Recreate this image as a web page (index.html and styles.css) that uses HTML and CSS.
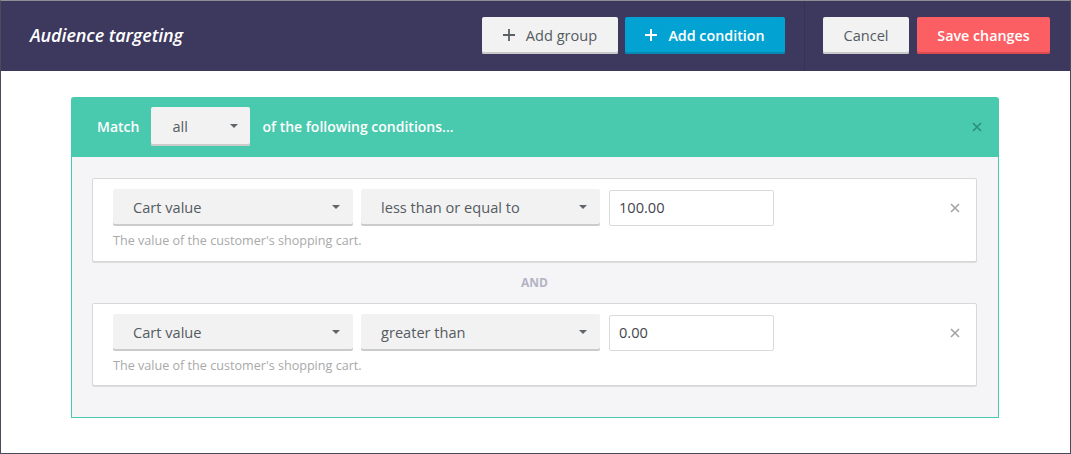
FILE: index.html
```html
<!DOCTYPE html>
<html>
<head>
<meta charset="utf-8">
<link rel="stylesheet" href="styles.css">
</head>
<body>
<div class="window">
  <header class="topbar">
    <h1 class="title">Audience targeting</h1>
    <div class="actions">
      <button class="btn btn-light"><svg class="plus" viewBox="0 0 12 12"><path d="M6 0V12M0 6H12"/></svg>Add group</button>
      <button class="btn btn-blue"><svg class="plus" viewBox="0 0 12 12"><path d="M6 0V12M0 6H12"/></svg>Add condition</button>
    </div>
    <div class="divider"></div>
    <div class="actions actions-right">
      <button class="btn btn-light btn-plain">Cancel</button>
      <button class="btn btn-red">Save changes</button>
    </div>
  </header>
  <main class="content">
    <section class="group">
      <div class="group-head">
        <span class="label">Match</span>
        <div class="select select-match"><span>all</span><i class="caret"></i></div>
        <span class="label">of the following conditions...</span>
        <svg class="close close-head" viewBox="0 0 10 10"><path d="M1 1L9 9M9 1L1 9"/></svg>
      </div>
      <div class="group-body">
        <div class="cond">
          <div class="cond-row">
            <div class="select select-wide"><span>Cart value</span><i class="caret"></i></div>
            <div class="select select-wide"><span>less than or equal to</span><i class="caret"></i></div>
            <div class="input">100.00</div>
            <svg class="close close-cond" viewBox="0 0 10 10"><path d="M1 1L9 9M9 1L1 9"/></svg>
          </div>
          <p class="help">The value of the customer's shopping cart.</p>
        </div>
        <div class="and">AND</div>
        <div class="cond">
          <div class="cond-row">
            <div class="select select-wide"><span>Cart value</span><i class="caret"></i></div>
            <div class="select select-wide"><span>greater than</span><i class="caret"></i></div>
            <div class="input">0.00</div>
            <svg class="close close-cond" viewBox="0 0 10 10"><path d="M1 1L9 9M9 1L1 9"/></svg>
          </div>
          <p class="help">The value of the customer's shopping cart.</p>
        </div>
      </div>
    </section>
  </main>
</div>
</body>
</html>
```
FILE: styles.css
```css
* { box-sizing: border-box; }
html, body { margin: 0; padding: 0; }
body {
  font-family: "Open Sans", "Noto Sans", sans-serif;
  width: 1071px;
  height: 454px;
  overflow: hidden;
  background: #fff;
}
.window {
  width: 1071px;
  height: 454px;
  border: 1px solid #4b4a5c;
  border-top-color: #8e8e94;
  display: flex;
  flex-direction: column;
}
.topbar {
  height: 70px;
  background: #3d385e;
  display: flex;
  align-items: center;
  padding: 0 20px 2px 29px;
  flex: none;
}
.title {
  margin: 0;
  font-size: 18px;
  font-style: italic;
  font-weight: 600;
  color: #fff;
  flex: 1;
  letter-spacing: -0.1px;
}
.actions { display: flex; gap: 7px; }
.actions-right { gap: 8px; }
.divider {
  width: 1px;
  align-self: stretch;
  margin-bottom: -2px;
  background: #36324f;
  margin-left: 19px;
  margin-right: 18px;
}
.btn {
  height: 37px;
  border: 0;
  border-radius: 2px;
  font-family: inherit;
  font-size: 14.6px;
  display: flex;
  align-items: center;
  justify-content: center;
  padding: 0;
  cursor: pointer;
}
.btn-light {
  background: #f2f2f2;
  color: #555b62;
  box-shadow: inset 0 -2px 0 #c9c9c9;
  width: 136px;
}
.btn-plain { width: 86px; }
.btn-blue {
  background: #02a3d3;
  color: #fff;
  font-weight: 600;
  width: 160px;
  box-shadow: inset 0 -2px 0 #0689b3;
  font-size: 14.3px;
}
.btn-red {
  background: #fb5f64;
  color: #fff;
  font-weight: 600;
  width: 133px;
  box-shadow: inset 0 -2px 0 #dd4a50;
  font-size: 14.3px;
}
.plus {
  width: 12px;
  height: 12px;
  margin-right: 11px;
  fill: none;
  stroke: currentColor;
  stroke-width: 2;
}
.btn-light .plus { stroke: #5a6066; stroke-width: 1.8; }
.content {
  flex: 1;
  padding: 26px 70px 0 70px;
}
.group {
  width: 928px;
}
.group-head {
  height: 60px;
  background: #49c9ad;
  border-radius: 3px 3px 0 0;
  display: flex;
  align-items: center;
  padding: 0 17px 1px 26px;
  gap: 12px;
}
.label {
  color: #fff;
  font-weight: 600;
  font-size: 14px;
}
.select {
  height: 37px;
  background: #f2f2f2;
  box-shadow: inset 0 -2px 0 #cbcbcb;
  border-radius: 2px;
  display: flex;
  align-items: center;
  justify-content: space-between;
  padding: 0 13px 1px 20px;
  font-size: 14.6px;
  color: #555b62;
}
.select-match {
  width: 99px;
  height: 39px;
  padding: 0 12px 1px 21px;
}
.caret {
  width: 0;
  height: 0;
  border-left: 4px solid transparent;
  border-right: 4px solid transparent;
  border-top: 4px solid #5f656b;
}
.close {
  width: 10px;
  height: 10px;
  fill: none;
  stroke-width: 1.6;
  flex: none;
}
.close-head {
  margin-left: auto;
  stroke: #2f8e79;
}
.group-body {
  background: #f5f5f8;
  border: 1px solid #49c9ad;
  border-top: 0;
  padding: 21px 21px 31px 20px;
}
.cond {
  height: 84px;
  background: #fff;
  border: 1px solid #d8d8d8;
  border-radius: 2px;
  box-shadow: 0 1px 0 #dcdcdc;
  padding: 10px 20px 0 20px;
}
.cond + .and + .cond { height: 83px; }
.cond-row {
  display: flex;
  align-items: center;
  gap: 8px;
}
.select-wide { width: 240px; }
.select-wide + .select-wide { width: 239px; }
.input {
  width: 165px;
  height: 36px;
  margin-left: 1px;
  border: 1px solid #dadada;
  border-radius: 2px;
  display: flex;
  align-items: center;
  padding: 0 9px 1px;
  font-size: 14.6px;
  color: #3f454b;
}
.close-cond {
  margin-left: auto;
  stroke: #a3a3a3;
  margin-right: -4px;
}
.help {
  margin: 6px 0 0;
  font-size: 12.6px;
  color: #a9a9a9;
  line-height: 18px;
}
.and {
  height: 41px;
  display: flex;
  align-items: center;
  justify-content: center;
  font-size: 12px;
  font-weight: 700;
  color: #b3b3c2;
}
```
